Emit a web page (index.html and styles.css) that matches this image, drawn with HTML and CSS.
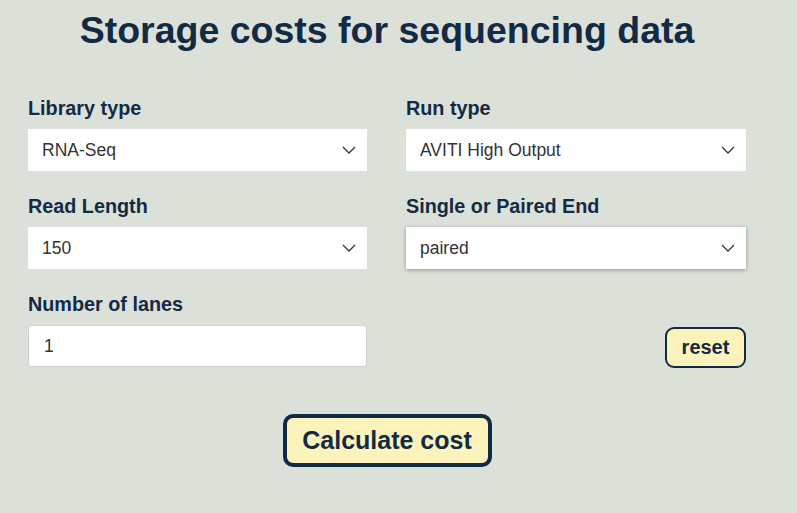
FILE: index.html
```html
<!DOCTYPE html>
<html lang="en">
<head>
<meta charset="utf-8">
<title>Storage costs for sequencing data</title>
<link rel="stylesheet" href="styles.css">
</head>
<body>
<main class="container">
  <h1 class="title">Storage costs for sequencing data</h1>
  <form class="grid">
    <div class="field">
      <label class="label">Library type</label>
      <div class="select-wrap">
        <select class="select"><option>RNA-Seq</option></select>
        <svg class="chev" width="14" height="8" viewBox="0 0 14 8"><path d="M1 1 L7 7 L13 1" fill="none" stroke="#333" stroke-width="1.3"/></svg>
      </div>
    </div>
    <div class="field">
      <label class="label">Run type</label>
      <div class="select-wrap">
        <select class="select"><option>AVITI High Output</option></select>
        <svg class="chev" width="14" height="8" viewBox="0 0 14 8"><path d="M1 1 L7 7 L13 1" fill="none" stroke="#333" stroke-width="1.3"/></svg>
      </div>
    </div>
    <div class="field">
      <label class="label">Read Length</label>
      <div class="select-wrap">
        <select class="select"><option>150</option></select>
        <svg class="chev" width="14" height="8" viewBox="0 0 14 8"><path d="M1 1 L7 7 L13 1" fill="none" stroke="#333" stroke-width="1.3"/></svg>
      </div>
    </div>
    <div class="field">
      <label class="label">Single or Paired End</label>
      <div class="select-wrap focused">
        <select class="select"><option>paired</option></select>
        <svg class="chev" width="14" height="8" viewBox="0 0 14 8"><path d="M1 1 L7 7 L13 1" fill="none" stroke="#333" stroke-width="1.3"/></svg>
      </div>
    </div>
    <div class="field">
      <label class="label">Number of lanes</label>
      <input class="input" type="text" value="1">
    </div>
    <div class="field reset-cell">
      <button type="button" class="btn btn-reset">reset</button>
    </div>
  </form>
  <div class="actions">
    <button type="button" class="btn btn-calc">Calculate cost</button>
  </div>
</main>
</body>
</html>
```

FILE: styles.css
```css
html, body {
  margin: 0;
  padding: 0;
}
body {
  background: #dbe1d9;
  font-family: "Liberation Sans", Arial, sans-serif;
  color: #132a45;
  width: 797px;
  height: 513px;
  overflow: hidden;
}
.container {
  width: 718px;
  margin-left: 28px;
}
.title {
  margin: 0;
  padding-top: 10px;
  height: 40px;
  line-height: 40px;
  font-size: 37.5px;
  font-weight: bold;
  text-align: center;
  color: #132a45;
}
.grid {
  margin-top: 47px;
  display: grid;
  grid-template-columns: 339px 340px;
  column-gap: 39px;
  row-gap: 24px;
}
.field {
  display: flex;
  flex-direction: column;
}
.label {
  font-size: 19.8px;
  font-weight: bold;
  line-height: 22px;
  margin-bottom: 10px;
  color: #132a45;
}
.select-wrap {
  position: relative;
  height: 42px;
  background: #fff;
}
.select-wrap.focused {
  box-shadow: 0 1px 4px rgba(0, 0, 0, 0.35);
}
.select {
  appearance: none;
  -webkit-appearance: none;
  width: 100%;
  height: 42px;
  border: none;
  background: transparent;
  padding: 0 0 0 14px;
  font-family: "Liberation Sans", Arial, sans-serif;
  font-size: 17.5px;
  color: #333;
  outline: none;
}
.chev {
  position: absolute;
  right: 11px;
  top: 17px;
}
.input {
  box-sizing: border-box;
  height: 42px;
  width: 100%;
  border: 1px solid #cfd3cf;
  border-radius: 4px;
  background: #fff;
  padding: 0 0 0 15px;
  font-family: "Liberation Sans", Arial, sans-serif;
  font-size: 17.5px;
  color: #333;
  outline: none;
}
.reset-cell {
  justify-content: flex-end;
  align-items: flex-end;
}
.btn {
  font-family: "Liberation Sans", Arial, sans-serif;
  font-weight: bold;
  color: #132a45;
  background: #fbf3bb;
  border: 2px solid #132a45;
  cursor: pointer;
}
.btn-reset {
  width: 81px;
  height: 41px;
  border-radius: 9px;
  font-size: 20px;
  padding: 0;
  margin-bottom: -1px;
}
.actions {
  display: flex;
  justify-content: center;
  margin-top: 47px;
}
.btn-calc {
  width: 209px;
  height: 53px;
  border-width: 4px;
  border-radius: 10px;
  font-size: 25px;
  padding: 0;
}
```
